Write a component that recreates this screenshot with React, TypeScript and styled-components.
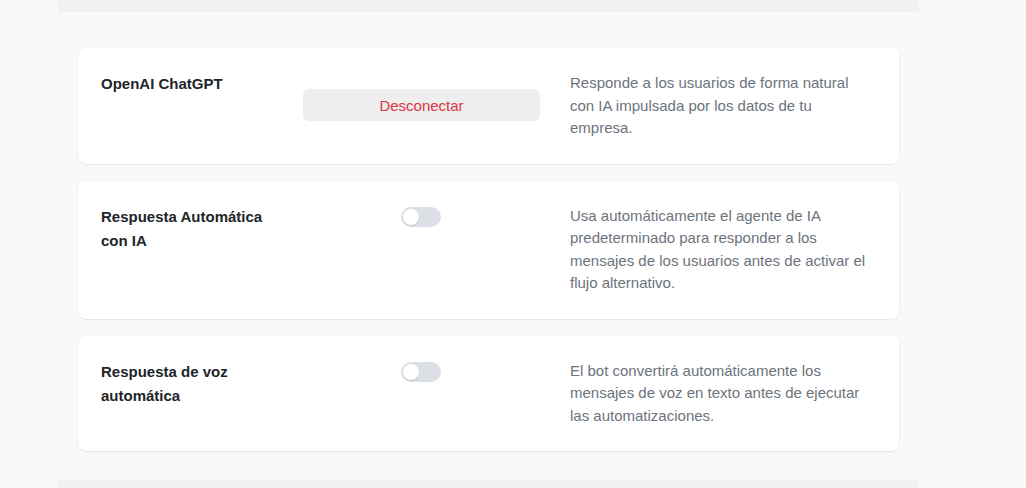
import React from "react";
import styled, { createGlobalStyle } from "styled-components";

const GlobalStyle = createGlobalStyle`
  html, body {
    margin: 0;
    padding: 0;
    background: #f8f9fa;
    font-family: "Liberation Sans", Arial, Helvetica, sans-serif;
    -webkit-font-smoothing: antialiased;
  }
  * { box-sizing: border-box; }
`;

const Page = styled.div`
  padding-left: 58px;
  width: 919px;
  display: flex;
  flex-direction: column;
`;

const GreyStrip = styled.div<{ $h: number }>`
  height: ${(p) => p.$h}px;
  background: #f0f1f3;
`;

const Section = styled.section`
  display: flex;
  flex-direction: column;
  gap: 17px;
  padding: 36px 20px 29px;
`;

const Card = styled.div`
  background: #ffffff;
  border-radius: 8px;
  box-shadow: 0 1px 2px rgba(16, 24, 40, 0.07), 0 0 0 1px rgba(16, 24, 40, 0.02);
  padding: 24px 23px;
  display: grid;
  grid-template-columns: 202px 267px 1fr;
  align-items: start;
`;

const Title = styled.div`
  width: 180px;
  font-size: 15px;
  line-height: 24px;
  font-weight: 700;
  color: #212529;
`;

const Control = styled.div`
  width: 237px;
  display: flex;
  justify-content: center;
`;

const Description = styled.p`
  margin: 0;
  font-size: 15px;
  line-height: 22.5px;
  color: #6c737d;
`;

const DisconnectButton = styled.button`
  margin-top: 17px;
  width: 237px;
  height: 32px;
  border: none;
  border-radius: 6px;
  background: #eeeeee;
  color: #dc3545;
  font-family: inherit;
  font-size: 15px;
  cursor: pointer;
`;

const Track = styled.button<{ $on: boolean }>`
  position: relative;
  margin-top: 2px;
  margin-right: 1px;
  width: 40px;
  height: 20px;
  padding: 0;
  border: none;
  border-radius: 10px;
  background: ${(p) => (p.$on ? "#4f6bed" : "#dcdfe6")};
  cursor: pointer;
`;

const Knob = styled.span<{ $on: boolean }>`
  position: absolute;
  top: 2px;
  left: ${(p) => (p.$on ? "22px" : "2px")};
  width: 16px;
  height: 16px;
  border-radius: 50%;
  background: #ffffff;
  box-shadow: 0 1px 1px rgba(0, 0, 0, 0.12);
  transition: left 0.15s ease;
`;

function Toggle({ on, onChange }: { on: boolean; onChange: () => void }) {
  return (
    <Track $on={on} onClick={onChange} aria-pressed={on}>
      <Knob $on={on} />
    </Track>
  );
}

export default function App() {
  const [autoReply, setAutoReply] = React.useState(false);
  const [voiceReply, setVoiceReply] = React.useState(false);

  return (
    <>
      <GlobalStyle />
      <Page>
        <GreyStrip $h={12} />
        <Section>
          <Card>
            <Title>OpenAI ChatGPT</Title>
            <Control>
              <DisconnectButton>Desconectar</DisconnectButton>
            </Control>
            <Description>
              Responde a los usuarios de forma natural con IA impulsada por los datos de tu empresa.
            </Description>
          </Card>
          <Card>
            <Title>Respuesta Automática con IA</Title>
            <Control>
              <Toggle on={autoReply} onChange={() => setAutoReply((v) => !v)} />
            </Control>
            <Description>
              Usa automáticamente el agente de IA predeterminado para responder a los mensajes de los
              usuarios antes de activar el flujo alternativo.
            </Description>
          </Card>
          <Card>
            <Title>Respuesta de voz automática</Title>
            <Control>
              <Toggle on={voiceReply} onChange={() => setVoiceReply((v) => !v)} />
            </Control>
            <Description>
              El bot convertirá automáticamente los mensajes de voz en texto antes de ejecutar las
              automatizaciones.
            </Description>
          </Card>
        </Section>
        <GreyStrip $h={20} />
      </Page>
    </>
  );
}
